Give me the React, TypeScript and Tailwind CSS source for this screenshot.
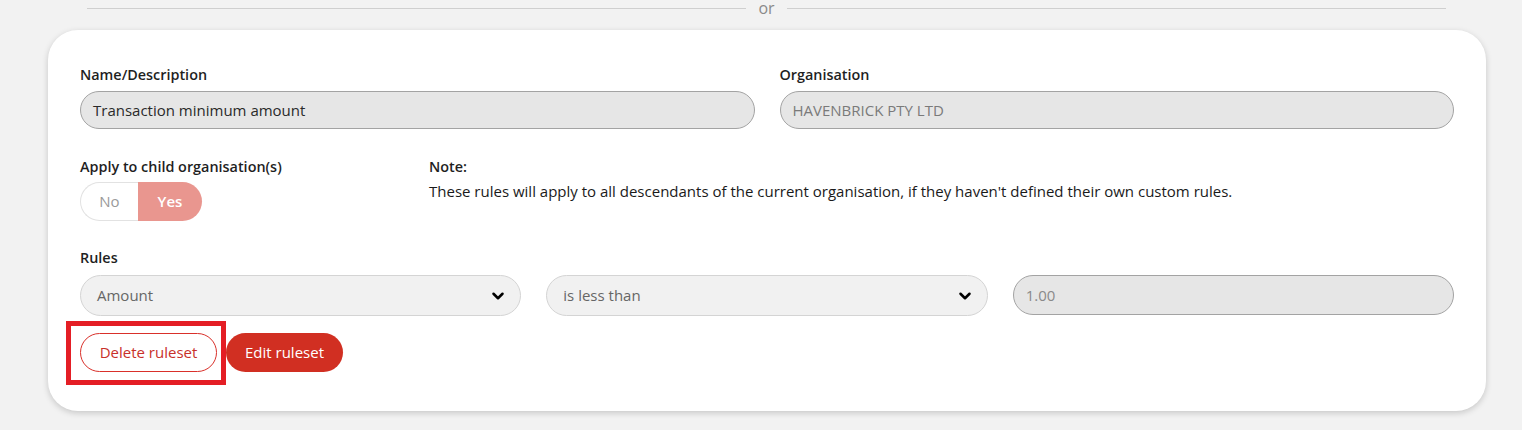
import { ChevronDown } from "lucide-react";

const Label = ({ children }: { children: React.ReactNode }) => (
  <div className="text-[14.4px] leading-5 font-semibold text-[#1f1f1f]">{children}</div>
);

const SelectBox = ({ value }: { value: string }) => (
  <div className="flex h-[41px] items-center justify-between rounded-full border border-[#d4d4d4] bg-[#f1f1f1] pl-[16px] pr-[13px]">
    <span className="text-[15px] text-[#666]">{value}</span>
    <ChevronDown className="h-[18px] w-[18px] text-black" strokeWidth={3.4} />
  </div>
);

const App = () => {
  return (
    <div
      className="h-[430px] w-[1522px] overflow-hidden bg-[#f2f2f2]"
      style={{ fontFamily: '"Open Sans", "Noto Sans", sans-serif' }}
    >
      {/* divider */}
      <div className="ml-[87px] flex h-4 w-[1359px] items-center">
        <div className="h-px flex-1 bg-[#cfcfcf]" />
        <span className="px-3 text-[16px] leading-4 text-[#8a8a8a]">or</span>
        <div className="h-px flex-1 bg-[#cfcfcf]" />
      </div>

      {/* card */}
      <div className="relative ml-[48px] mt-[14px] w-[1438px] rounded-[30px] bg-white px-8 pb-[39px] pt-[35px] shadow-[0_2px_6px_rgba(0,0,0,0.18)]">
        <div className="grid grid-cols-2 gap-[25px]">
          <div>
            <Label>Name/Description</Label>
            <div className="mt-[6px] flex h-[38px] items-center rounded-full border border-[#a3a3a3] bg-[#e6e6e6] px-[12px] text-[15px] text-[#2a2a2a]">
              Transaction minimum amount
            </div>
          </div>
          <div>
            <Label>Organisation</Label>
            <div className="mt-[6px] flex h-[38px] items-center rounded-full border border-[#a3a3a3] bg-[#e6e6e6] px-[12px] text-[15px] text-[#7a7a7a]">
              HAVENBRICK PTY LTD
            </div>
          </div>
        </div>

        <div className="mt-[28px] flex">
          <div className="w-[349px]">
            <Label>Apply to child organisation(s)</Label>
            <div className="mt-[5px] flex h-[39px] w-[122px] text-[15px]">
              <div className="flex w-[58px] items-center justify-center rounded-l-full border border-r-0 border-[#e2e2e2] bg-white text-[#9a9a9a]">
                No
              </div>
              <div className="flex w-[64px] items-center justify-center rounded-r-full bg-[#e9968f] font-semibold text-white">
                Yes
              </div>
            </div>
          </div>
          <div>
            <Label>Note:</Label>
            <p className="mt-[4px] text-[15px] leading-5 text-[#1a1a1a]">
              These rules will apply to all descendants of the current organisation, if they haven't defined their own custom rules.
            </p>
          </div>
        </div>

        <div className="mt-[27px]">
          <Label>Rules</Label>
          <div className="mt-[7px] grid grid-cols-3 gap-[25px]">
            <SelectBox value="Amount" />
            <SelectBox value="is less than" />
            <div className="flex h-[40px] items-center rounded-full border border-[#a3a3a3] bg-[#e6e6e6] px-[12px] text-[15px] text-[#8a8a8a]">
              1.00
            </div>
          </div>
        </div>

        <div className="mt-[17px] flex gap-[9px]">
          <div className="relative">
            <button className="flex h-[39px] w-[137px] items-center justify-center rounded-full border border-[#d9302a] bg-white text-[15px] text-[#c8302a]">
              Delete ruleset
            </button>
            <div className="pointer-events-none absolute -left-[14px] -top-[12px] h-[64px] w-[160px] border-[5px] border-[#e41e25]" />
          </div>
          <button className="flex h-[39px] w-[117px] items-center justify-center rounded-full bg-[#d12f22] text-[15px] font-medium text-white">
            Edit ruleset
          </button>
        </div>
      </div>
    </div>
  );
};

export default App;
